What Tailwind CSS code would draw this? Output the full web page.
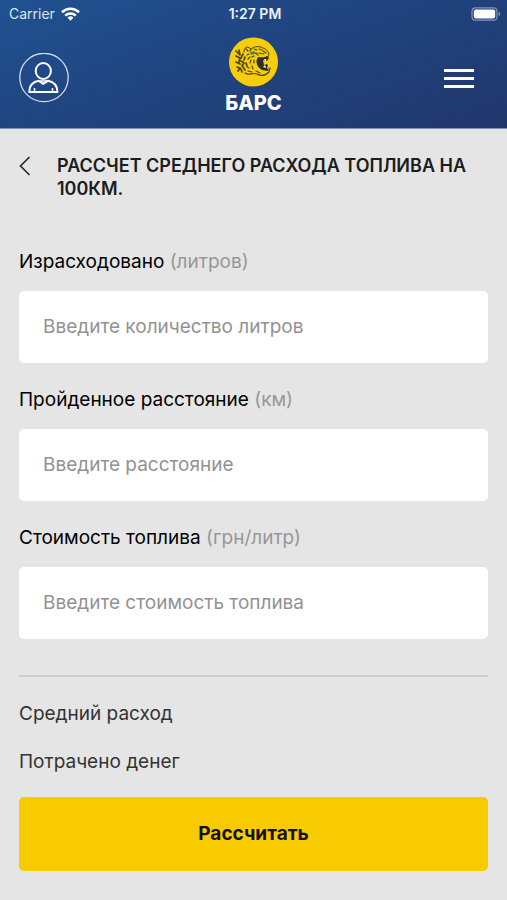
<!DOCTYPE html>
<html lang="ru">
<head>
<meta charset="utf-8">
<meta name="viewport" content="width=device-width, initial-scale=1">
<title>БАРС</title>
<script src="https://cdn.jsdelivr.net/npm/@tailwindcss/browser@4"></script>
</head>
<body class="min-h-screen bg-[#e5e5e5] font-['Inter','Liberation_Sans',sans-serif] text-[#1c1c1c]">
<header class="border-b border-[#8391b3] bg-linear-160 from-[#1f5191] to-[#20366b] text-white">
  <div class="grid h-7 grid-cols-3 items-center pl-[9px] pr-[6px] text-[14px]">
    <div class="flex items-center gap-[6px] text-[14px] leading-4 text-[#dce6f2]">
      <span>Carrier</span>
      <svg class="h-[14px] w-[19px]" viewBox="0 0 19 14" fill="none" stroke="#fff" stroke-width="2.6" aria-hidden="true">
        <path d="M1 5.2C5.8.6 13.2.6 18 5.2"/>
        <path d="M4.2 8.6c3-2.8 7.6-2.8 10.6 0"/>
        <path d="M6.6 10.7a4.2 4.2 0 0 1 5.8 0L9.500 13.800z" fill="#fff" stroke="none"/>
      </svg>
    </div>
    <span class="text-center font-semibold leading-4 text-[#eef3fa]">1:27 PM</span>
    <svg class="h-[14px] w-[30px] justify-self-end" viewBox="0 0 30 14" aria-hidden="true">
      <rect x="1" y=".8" width="25" height="12.400" rx="3.500" fill="none" stroke="#8297bd" stroke-width="1.200"/>
      <rect x="2.800" y="2.600" width="21.400" height="8.800" rx="2" fill="#fff"/>
      <path d="M27.600 4.800c2 .6 2 3.800 0 4.400z" fill="#8297bd"/>
    </svg>
  </div>
  <div class="grid h-[100px] grid-cols-3 items-center px-[19px]">
    <button type="button" aria-label="Профиль" class="justify-self-start">
      <svg class="size-[50px]" viewBox="0 0 50 50" fill="none" stroke="#fff" aria-hidden="true">
        <circle cx="25" cy="24.500" r="24.200" stroke="#d3dcec" stroke-width="1.300"/>
        <ellipse cx="24.300" cy="18" rx="7.600" ry="7.900" stroke-width="2"/>
        <path d="M10.200 39c0-6.500 3.500-10 9.500-11.200l4.600 3 4.600-3C35 29 38.500 32.500 38.500 39z" stroke-width="2" stroke-linejoin="round"/>
        <path d="M19.500 28h9.600M15.500 38.500v-3.500M33.500 38.500v-3.500" stroke-width="1.500"/>
      </svg>
    </button>
    <a href="#" class="flex flex-col items-center justify-self-center">
      <svg class="size-[50px]" viewBox="0 0 50 50" aria-hidden="true">
        <circle cx="25.500" cy="25" r="24.500" fill="#f7cc0b"/>
        <g fill="none" stroke="#4b4513" stroke-linecap="round" stroke-linejoin="round">
          <path d="M16 15c0-3 1-5 4-5l3 2c4-3 8-3 12-1 3 1 5 3 6 6l-1 3-5 1c-3-1-5 0-6 3" stroke-width="1"/>
          <path d="M8 14l3 3M11 13l1 5M8 19l4 2-1 4M15 17l-2 4M8 25l4 2M13 24l3 2-2 3M9 30l3 1M17 20l-1 3M15 30l2 3M10 34l2-3M18 26l1 3M14 35l-1-3" stroke-width="1.700"/>
          <path d="M18 12l2 2M22 14l1-2M26 12l3 1M19 18l2-1M20 22l2-2M22 26l1-3M31 12l3 1M24 20l2-1M21 31l-2-1M24 29l1 3M31 16l5 1M26 23v3M28 16l2 2M24 17l3-1M35 14l3 2" stroke-width="1.200"/>
          <path d="M17 36c4 3 8-1 12 1 5 3 9 1 12-2l1-4M20 34l4 1M28 34l4 2" stroke-width="1.200"/>
        </g>
        <path d="M30 20l5 1 4-2 2 2-2 3-4-1 1 5 3-1 2 4-1 3-6-1c-5-3-7-8-4-13z" fill="#2e2e29"/>
        <path d="M36 22l1.500 3 1-3zM35 30l2-2 1 3zM39 31l1.500-3v4z" fill="#fff"/>
        <path d="M22 15l5-1-1 3-3 1z" fill="#468568"/>
      </svg>
      <span class="text-[20px] font-extrabold leading-8">БАРС</span>
    </a>
    <button type="button" aria-label="Меню" class="mr-[14px] flex w-[30px] flex-col gap-[5px] justify-self-end">
      <span class="h-[3px] w-full bg-white"></span>
      <span class="h-[3px] w-full bg-white"></span>
      <span class="h-[3px] w-full bg-white"></span>
    </button>
  </div>
</header>
<main class="px-[19px] pt-[25px] pb-[29px]">
  <div class="flex items-start">
    <button type="button" aria-label="Назад" class="mt-[2px] w-[38px] shrink-0">
      <svg class="h-5 w-3" viewBox="0 0 12 20" fill="none" stroke="#2b2b2b" stroke-width="1.700" aria-hidden="true"><path d="M10.500 1L1.500 10l9 9"/></svg>
    </button>
    <h1 class="text-[18px] font-semibold leading-[23px]">РАССЧЕТ СРЕДНЕГО РАСХОДА ТОПЛИВА НА 100КМ.</h1>
  </div>
  <form>
    <div class="mt-[50px] flex flex-col gap-[25px]">
      <div>
        <label for="liters" class="block text-[19px] leading-[24px] text-black">Израсходовано <span class="text-[#979797]">(литров)</span></label>
        <input id="liters" type="text" placeholder="Введите количество литров" class="mt-[17px] block h-[72px] w-full rounded-[5px] bg-white px-6 pb-[2px] text-[19px] placeholder:text-[#929292]">
      </div>
      <div>
        <label for="distance" class="block text-[19px] leading-[24px] text-black">Пройденное расстояние <span class="text-[#979797]">(км)</span></label>
        <input id="distance" type="text" placeholder="Введите расстояние" class="mt-[17px] block h-[72px] w-full rounded-[5px] bg-white px-6 pb-[2px] text-[19px] placeholder:text-[#929292]">
      </div>
      <div>
        <label for="price" class="block text-[19px] leading-[24px] text-black">Стоимость топлива <span class="text-[#979797]">(грн/литр)</span></label>
        <input id="price" type="text" placeholder="Введите стоимость топлива" class="mt-[17px] block h-[72px] w-full rounded-[5px] bg-white px-6 pb-[2px] text-[19px] placeholder:text-[#929292]">
      </div>
    </div>
    <hr class="mt-[36px] border-t-2 border-[#cecece]">
    <div class="mt-[25px] flex flex-col gap-6 text-[19px] leading-[24px] text-[#333]">
      <p>Средний расход</p>
      <p>Потрачено денег</p>
    </div>
    <button type="submit" class="mt-[23px] h-[74px] w-full rounded-[5px] bg-[#f8ca00] text-[19px] font-bold text-[#111]">Рассчитать</button>
  </form>
</main>
</body>
</html>
